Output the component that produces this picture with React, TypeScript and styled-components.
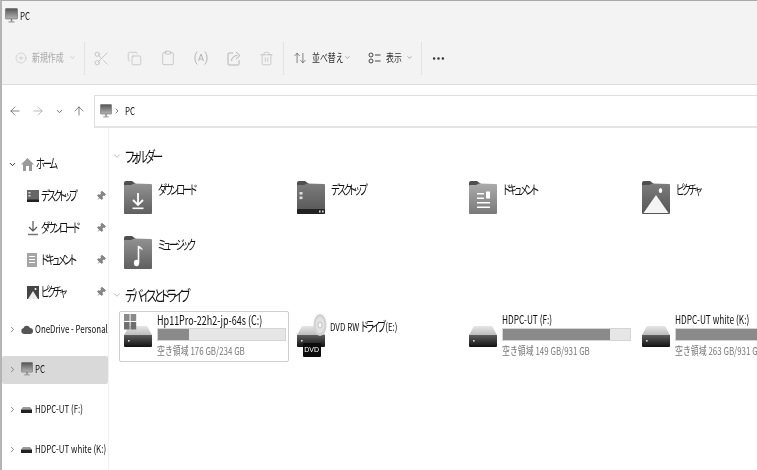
import type { ReactNode } from "react";
import styled, { createGlobalStyle } from "styled-components";
import {
  ArrowLeft,
  ArrowRight,
  ArrowUp,
  ArrowUpDown,
  ChevronDown,
  ChevronRight,
  CirclePlus,
  Clipboard,
  Copy,
  MoreHorizontal,
  Pin,
  Scissors,
  Trash2,
} from "lucide-react";

const GlobalStyle = createGlobalStyle`
  html, body {
    margin: 0;
    background: #fff;
  }
  body {
    font-family: "Noto Sans CJK JP", "Liberation Sans", sans-serif;
    color: #111;
    line-height: 1.2;
  }
`;

const Gradients = () => (
  <svg width="0" height="0" style={{ position: "absolute" }}>
    <defs>
      <linearGradient id="fGray" x1="0" y1="0" x2="0" y2="1">
        <stop offset="0" stopColor="#929292" />
        <stop offset="1" stopColor="#5f5f5f" />
      </linearGradient>
      <linearGradient id="fLight" x1="0" y1="0" x2="0" y2="1">
        <stop offset="0" stopColor="#ababab" />
        <stop offset="1" stopColor="#797979" />
      </linearGradient>
      <linearGradient id="fDark" x1="0" y1="0" x2="0" y2="1">
        <stop offset="0" stopColor="#7c7c7c" />
        <stop offset="1" stopColor="#555" />
      </linearGradient>
      <linearGradient id="dTop" x1="0" y1="0" x2="0" y2="1">
        <stop offset="0" stopColor="#e6e6e6" />
        <stop offset="1" stopColor="#bdbdbd" />
      </linearGradient>
      <linearGradient id="dBody" x1="0" y1="0" x2="0" y2="1">
        <stop offset="0" stopColor="#5e5e5e" />
        <stop offset="1" stopColor="#111" />
      </linearGradient>
      <linearGradient id="screen" x1="0" y1="0" x2="0" y2="1">
        <stop offset="0" stopColor="#555" />
        <stop offset="1" stopColor="#b5b5b5" />
      </linearGradient>
    </defs>
  </svg>
);

const PcIcon = ({ size = 13 }: { size?: number }) => (
  <svg width={size} height={size * 1.15} viewBox="0 0 13 15">
    <rect x="0.5" y="0.5" width="12" height="10.500" rx="0.6" fill="url(#screen)" stroke="#666" strokeWidth="0.6" />
    <rect x="5.8" y="11" width="1.4" height="2.500" fill="#777" />
    <rect x="3.5" y="13.500" width="6" height="1" fill="#888" />
  </svg>
);

const Folder = ({ fill, children }: { fill: string; children: ReactNode }) => (
  <svg width="28" height="33" viewBox="0 0 28 33">
    <path d="M0 2a2 2 0 0 1 2-2h6l4 3v3H0z" fill="#4f4f4f" />
    <path d="M0 5a1 1 0 0 1 1-1h6l3-1.5 17 .5a1 1 0 0 1 1 1v28a1 1 0 0 1-1 1H1a1 1 0 0 1-1-1z" fill={`url(#${fill})`} />
    {children}
  </svg>
);

const DownloadFolder = () => (
  <Folder fill="fGray">
    <path d="M14 12v12M9 19l5 5 5-5" fill="none" stroke="#fff" strokeWidth="1.8" />
    <rect x="8.5" y="26.5" width="11" height="1.6" fill="#fff" />
  </Folder>
);

const DesktopFolder = () => (
  <Folder fill="fDark">
    <rect x="0" y="28" width="28" height="5" rx="1" fill="#222" />
    <rect x="2.5" y="11" width="3" height="2.6" fill="#ddd" />
    <rect x="2.5" y="15.5" width="3" height="2.6" fill="#ddd" />
    <rect x="22" y="29.5" width="1.6" height="2" fill="#ddd" />
    <rect x="25" y="29.5" width="1.6" height="2" fill="#ddd" />
  </Folder>
);

const DocumentsFolder = () => (
  <Folder fill="fLight">
    <rect x="8" y="12" width="7" height="1.5" fill="#fff" />
    <rect x="8" y="16.5" width="7" height="1.5" fill="#fff" />
    <rect x="17" y="10.5" width="4" height="7" fill="#fff" />
    <rect x="8" y="21" width="13" height="1.5" fill="#fff" />
    <rect x="8" y="25.5" width="13" height="1.5" fill="#fff" />
  </Folder>
);

const PicturesFolder = () => (
  <Folder fill="fDark">
    <path d="M1.5 32 14 14l12.5 18z" fill="#f4f4f4" />
    <ellipse cx="18.5" cy="9.5" rx="1.7" ry="2.6" fill="#fff" />
  </Folder>
);

const MusicFolder = () => (
  <Folder fill="fGray">
    <path d="M14.5 10v17" stroke="#fff" strokeWidth="1.6" />
    <path d="M14.5 9.5c2 1.5 4 2 4.5 5-1.5-1.5-3-2-4.5-2z" fill="#fff" />
    <ellipse cx="12.5" cy="27" rx="2.6" ry="3.2" fill="#fff" />
  </Folder>
);

const DriveShape = () => (
  <>
    <path d="M5 12h18l5 9H0z" fill="url(#dTop)" />
    <path d="M0 21h28v11a1 1 0 0 1-1 1H1a1 1 0 0 1-1-1z" fill="url(#dBody)" />
    <rect x="4" y="26" width="1.6" height="1.6" fill="#ddd" />
  </>
);

const HardDrive = () => (
  <svg width="28" height="34" viewBox="0 0 28 34">
    <DriveShape />
  </svg>
);

const WindowsDrive = () => (
  <svg width="28" height="34" viewBox="0 0 28 34">
    <DriveShape />
    <rect x="0" y="0" width="5.6" height="7" fill="#8a8a8a" />
    <rect x="6.6" y="0" width="5.6" height="7" fill="#8a8a8a" />
    <rect x="0" y="8" width="5.6" height="7.5" fill="#6f6f6f" />
    <rect x="6.6" y="8" width="5.6" height="7.5" fill="#6f6f6f" />
  </svg>
);

const DvdDrive = () => (
  <svg width="30" height="34" viewBox="0 0 30 34">
    <DriveShape />
    <ellipse cx="23" cy="11" rx="6.500" ry="11" fill="#d2d2d2" />
    <ellipse cx="23" cy="11" rx="4.500" ry="8" fill="#e2e2e2" />
    <ellipse cx="23" cy="11" rx="2" ry="3" fill="#f7f7f7" stroke="#aaa" strokeWidth="0.6" />
  </svg>
);

const RenameIcon = () => (
  <svg width="14" height="18" viewBox="0 0 14 18" fill="none" stroke="#b4b4b4" strokeWidth="1">
    <path d="M3.500 2.500C1.500 4 1 6.500 1 9s.5 5 2.500 6.500M10.500 2.500C12.500 4 13 6.500 13 9s-.5 5-2.500 6.500" />
    <path d="M4.500 12 7 5l2.500 7M5.400 10h3.200" />
  </svg>
);

const ShareIcon = () => (
  <svg width="14" height="16" viewBox="0 0 14 16" fill="none" stroke="#b4b4b4" strokeWidth="1">
    <path d="M6 3H2a1 1 0 0 0-1 1v10a1 1 0 0 0 1 1h9a1 1 0 0 0 1-1v-4" />
    <path d="M4.500 11c.3-3.500 2.500-5.500 6-5.500M9 2l4 3.500L9 9" />
  </svg>
);

const Windows = styled.div`
  box-sizing: border-box;
  width: 757px;
  height: 470px;
  border-top: 1px solid #a9a9a9;
  border-left: 2px solid #b4b4b4;
  overflow: hidden;
  background: #fff;
  display: flex;
  flex-direction: column;
  filter: blur(0.35px);
`;

const Ribbon = styled.header`
  background: #f3f3f3;
  border-bottom: 1px solid #dcdcdc;
  height: 83px;
  flex: none;
`;

const TitleBar = styled.div`
  height: 29px;
  padding-left: 3px;
  display: flex;
  align-items: center;
  gap: 2px;
`;

const Toolbar = styled.div`
  height: 56px;
  display: flex;
  align-items: center;
  color: #333;
`;

const Label = styled.span<{ $size?: number; $color?: string }>`
  display: block;
  font-size: ${(p) => p.$size ?? 12}px;
  line-height: 1.2;
  color: ${(p) => p.$color ?? "#111"};
  white-space: nowrap;
  transform: scaleX(0.72);
  transform-origin: left center;
`;

const Kana = styled.span`
  font-size: 1.18em;
  line-height: 1;
  font-feature-settings: "palt";
  letter-spacing: -0.25em;
`;

const Tool = styled.div<{ $width: number; $pad: number }>`
  box-sizing: border-box;
  width: ${(p) => p.$width}px;
  padding-left: ${(p) => p.$pad}px;
  display: flex;
  align-items: center;
  gap: 5px;
  position: relative;
  flex: none;
`;

const ToolChevron = styled.span<{ $left: number }>`
  position: absolute;
  left: ${(p) => p.$left}px;
  top: 50%;
  margin-top: -4px;
  line-height: 0;
`;

const IconTool = styled.div`
  width: 33px;
  flex: none;
  display: flex;
  justify-content: center;
  align-items: center;
`;

const Sep = styled.div`
  width: 1px;
  height: 33px;
  background: #e2e2e2;
  flex: none;
`;

const Nav = styled.div`
  height: 43px;
  flex: none;
  display: flex;
  align-items: flex-end;
`;

const NavButtons = styled.div`
  width: 92px;
  height: 33px;
  flex: none;
  display: grid;
  grid-template-columns: 25px 22px 20px 20px;
  box-sizing: border-box;
  padding-bottom: 1px;
  align-items: center;
  justify-items: center;
`;

const AddressBar = styled.div`
  flex: 1;
  height: 33px;
  box-sizing: border-box;
  border: 1px solid #dedede;
  border-bottom: 2px solid #e4e4e4;
  border-right: none;
  display: flex;
  align-items: center;
  padding-left: 5px;
  gap: 1px;
`;

const AddressText = styled.div`
  margin-left: 3px;
`;

const Body = styled.div`
  flex: 1;
  display: flex;
  min-height: 0;
`;

const Sidebar = styled.nav`
  width: 106px;
  flex: none;
  border-right: 1px solid #f0f0f0;
  padding-top: 20px;
  overflow: hidden;
`;

const SideRow = styled.div<{ $height: number; $indent: number; $active?: boolean }>`
  height: ${(p) => p.$height}px;
  display: flex;
  align-items: center;
  padding-left: ${(p) => p.$indent}px;
  position: relative;
  &::before {
    content: "";
    display: ${(p) => (p.$active ? "block" : "none")};
    position: absolute;
    inset: 7px 0 5px 0;
    background: #d9d9d9;
    border-radius: 2px;
  }
  & > * {
    position: relative;
  }
`;

const SideChevron = styled.span`
  width: 13px;
  flex: none;
  line-height: 0;
`;

const SideIcon = styled.span<{ $width: number }>`
  width: ${(p) => p.$width}px;
  flex: none;
  line-height: 0;
`;

const SideText = styled.span`
  flex: 1;
  min-width: 0;
  display: block;
  margin-top: -1px;
`;

const PinBox = styled.span`
  position: absolute;
  left: 94px;
  line-height: 0;
  transform: rotate(40deg);
`;

const Group = styled.div`
  margin-bottom: 1px;
`;

const Main = styled.main`
  flex: 1;
  min-width: 0;
  padding-top: 18px;
  overflow: hidden;
`;

const SectionHead = styled.div`
  height: 20px;
  display: flex;
  align-items: center;
  padding-left: 3px;
  gap: 3px;
`;

const Grid = styled.div<{ $top: number; $bottom: number; $gap: number }>`
  display: grid;
  grid-template-columns: repeat(4, 172.7px);
  row-gap: ${(p) => p.$gap}px;
  margin: ${(p) => p.$top}px 0 ${(p) => p.$bottom}px 10px;
  width: 700px;
`;

const FolderItem = styled.div`
  height: 33px;
  display: flex;
  padding-left: 5px;
  gap: 6px;
`;

const FolderName = styled.div`
  padding-top: 1px;
`;

const Tile = styled.div<{ $selected?: boolean }>`
  box-sizing: border-box;
  width: 170px;
  height: 51px;
  border: 1px solid ${(p) => (p.$selected ? "#cfcfcf" : "transparent")};
  border-radius: 2px;
  display: flex;
  padding-left: 4px;
  gap: 5px;
`;

const TileIcon = styled.div`
  width: 28px;
  height: 34px;
  margin-top: 2px;
  position: relative;
  line-height: 0;
  flex: none;
`;

const Badge = styled.span`
  position: absolute;
  left: 6px;
  top: 29px;
  width: 18px;
  height: 14px;
  background: #0c0c0c;
  border-radius: 1px;
  color: #fff;
  font-size: 7px;
  line-height: 14px;
  text-align: center;
  font-family: "Liberation Sans", sans-serif;
`;

const TileText = styled.div<{ $center?: boolean }>`
  flex: 1;
  min-width: 0;
  display: flex;
  flex-direction: column;
  padding-top: ${(p) => (p.$center ? "7px" : "0")};
  justify-content: flex-start;
`;

const TileLine = styled.div`
  height: 15px;
  display: flex;
  align-items: center;
`;

const Meter = styled.div`
  box-sizing: border-box;
  width: 129px;
  height: 13px;
  margin-top: 1px;
  margin-bottom: 2px;
  background: #e6e6e6;
  border: 1px solid #d4d4d4;
`;

const MeterFill = styled.div`
  height: 100%;
  background: #8a8a8a;
`;

const gray = "#b4b4b4";

const folders: { name: string; icon: ReactNode }[] = [
  { name: "ダウンロード", icon: <DownloadFolder /> },
  { name: "デスクトップ", icon: <DesktopFolder /> },
  { name: "ドキュメント", icon: <DocumentsFolder /> },
  { name: "ピクチャ", icon: <PicturesFolder /> },
  { name: "ミュージック", icon: <MusicFolder /> },
];

const SmallDrive = () => (
  <svg width="11" height="6" viewBox="0 0 11 6">
    <path d="M2 0h7l2 2.500H0z" fill="#999" />
    <rect y="2.500" width="11" height="3.500" fill="#222" />
  </svg>
);

const quick: { name: string; icon: ReactNode }[] = [
  {
    name: "デスクトップ",
    icon: (
      <svg width="12" height="12" viewBox="0 0 12 12">
        <rect width="12" height="12" fill="#666" />
        <rect y="9.500" width="12" height="2.500" fill="#222" />
        <rect x="1.500" y="2" width="2" height="1.500" fill="#ddd" />
        <rect x="1.500" y="5" width="2" height="1.500" fill="#ddd" />
      </svg>
    ),
  },
  {
    name: "ダウンロード",
    icon: (
      <svg width="12" height="16" viewBox="0 0 12 16" fill="none" stroke="#555" strokeWidth="1.200">
        <path d="M6 1v10M2 7l4 4 4-4" />
        <path d="M1 14.500h10" stroke="#777" strokeWidth="1.500" />
      </svg>
    ),
  },
  {
    name: "ドキュメント",
    icon: (
      <svg width="11" height="14" viewBox="0 0 11 14">
        <rect width="10" height="14" fill="#a5a5a5" />
        <path d="M2 3.500h6M2 6.500h6M2 9.500h6" stroke="#fff" />
      </svg>
    ),
  },
  {
    name: "ピクチャ",
    icon: (
      <svg width="12" height="13" viewBox="0 0 12 13">
        <rect width="12" height="13" fill="#444" />
        <path d="M1 13 6 5l5 8z" fill="#eee" />
        <circle cx="8.500" cy="3" r="1" fill="#fff" />
      </svg>
    ),
  },
];

const drives = [
  { name: "HDPC-UT (F:)", free: 149 },
  { name: "HDPC-UT white (K:)", free: 263 },
];

const App = () => (
  <>
    <GlobalStyle />
    <Gradients />
    <Windows>
      <Ribbon>
        <TitleBar>
          <PcIcon size={13} />
          <Label $size={11}>PC</Label>
        </TitleBar>
        <Toolbar>
          <Tool $width={82} $pad={13}>
            <CirclePlus size={12} color={gray} strokeWidth={1} />
            <Label $size={11} $color="#a8a8a8">新規作成</Label>
            <ToolChevron $left={67}>
              <ChevronDown size={7} color={gray} />
            </ToolChevron>
          </Tool>
          <Sep />
          <IconTool><Scissors size={17} color={gray} strokeWidth={1} /></IconTool>
          <IconTool><Copy size={15} color={gray} strokeWidth={1} /></IconTool>
          <IconTool><Clipboard size={16} color={gray} strokeWidth={1} /></IconTool>
          <IconTool><RenameIcon /></IconTool>
          <IconTool><ShareIcon /></IconTool>
          <IconTool><Trash2 size={15} color={gray} strokeWidth={1} /></IconTool>
          <Sep />
          <Tool $width={76} $pad={9}>
            <ArrowUpDown size={14} color="#333" strokeWidth={1} />
            <Label $size={11} $color="#333">並べ替え</Label>
            <ToolChevron $left={60}>
              <ChevronDown size={7} color="#777" />
            </ToolChevron>
          </Tool>
          <Tool $width={61} $pad={8}>
            <svg width="13" height="12" viewBox="0 0 13 12" fill="none" stroke="#333" strokeWidth="0.900">
              <circle cx="3" cy="3" r="2" />
              <circle cx="3" cy="9" r="2" />
              <path d="M7 3h5.500M7 9h5.500" />
            </svg>
            <Label $size={11} $color="#333">表示</Label>
            <ToolChevron $left={46}>
              <ChevronDown size={7} color="#777" />
            </ToolChevron>
          </Tool>
          <Sep />
          <IconTool><MoreHorizontal size={15} color="#333" strokeWidth={2} /></IconTool>
        </Toolbar>
      </Ribbon>
      <Nav>
        <NavButtons>
          <ArrowLeft size={14} color="#444" strokeWidth={1.1} />
          <ArrowRight size={14} color="#999" strokeWidth={1.1} />
          <ChevronDown size={9} color="#444" />
          <ArrowUp size={14} color="#444" strokeWidth={1.1} />
        </NavButtons>
        <AddressBar>
          <PcIcon size={12} />
          <ChevronRight size={8} color="#444" />
          <AddressText><Label $size={11}>PC</Label></AddressText>
        </AddressBar>
      </Nav>
      <Body>
        <Sidebar>
          <Group>
            <SideRow $height={32} $indent={6}>
              <SideChevron><ChevronDown size={9} color="#222" strokeWidth={2.500} /></SideChevron>
              <SideIcon $width={15}>
                <svg width="13" height="13" viewBox="0 0 13 13">
                  <path d="M6.500 0 13 6.500h-2V13H8V8H5v5H2V6.500H0z" fill="#9a9a9a" />
                </svg>
              </SideIcon>
              <SideText><Label $size={11}><Kana>ホーム</Kana></Label></SideText>
            </SideRow>
            {quick.map((q) => (
              <SideRow key={q.name} $height={32} $indent={25}>
                <SideIcon $width={14}>{q.icon}</SideIcon>
                <SideText><Label $size={11}><Kana>{q.name}</Kana></Label></SideText>
                <PinBox><Pin size={10} color="#777" fill="#888" /></PinBox>
              </SideRow>
            ))}
          </Group>
          <SideRow $height={40} $indent={6}>
            <SideChevron><ChevronRight size={9} color="#666" /></SideChevron>
            <SideIcon $width={14}>
              <svg width="12" height="9" viewBox="0 0 12 9">
                <path d="M3 9a3 3 0 0 1-.5-5.900A3.500 3.500 0 0 1 9 3a3 3 0 0 1 0 6z" fill="#555" />
              </svg>
            </SideIcon>
            <SideText><Label $size={11}>OneDrive - Personal</Label></SideText>
          </SideRow>
          <SideRow $height={40} $indent={6} $active>
            <SideChevron><ChevronRight size={9} color="#666" /></SideChevron>
            <SideIcon $width={14}><PcIcon size={12} /></SideIcon>
            <SideText><Label $size={11}>PC</Label></SideText>
          </SideRow>
          <SideRow $height={40} $indent={6}>
            <SideChevron><ChevronRight size={9} color="#666" /></SideChevron>
            <SideIcon $width={14}><SmallDrive /></SideIcon>
            <SideText><Label $size={11}>HDPC-UT (F:)</Label></SideText>
          </SideRow>
          <SideRow $height={40} $indent={6}>
            <SideChevron><ChevronRight size={9} color="#666" /></SideChevron>
            <SideIcon $width={14}><SmallDrive /></SideIcon>
            <SideText><Label $size={11}>HDPC-UT white (K:)</Label></SideText>
          </SideRow>
        </Sidebar>
        <Main>
          <SectionHead>
            <ChevronDown size={10} color="#777" strokeWidth={1.200} />
            <Label $size={13}><Kana>フォルダー</Kana></Label>
          </SectionHead>
          <Grid $top={15} $bottom={16} $gap={22}>
            {folders.map((f) => (
              <FolderItem key={f.name}>
                {f.icon}
                <FolderName><Label $size={11}><Kana>{f.name}</Kana></Label></FolderName>
              </FolderItem>
            ))}
          </Grid>
          <SectionHead>
            <ChevronDown size={10} color="#777" strokeWidth={1.200} />
            <Label $size={13}><Kana>デバイスとドライブ</Kana></Label>
          </SectionHead>
          <Grid $top={6} $bottom={0} $gap={0}>
            <Tile $selected>
              <TileIcon><WindowsDrive /></TileIcon>
              <TileText>
                <TileLine><Label $size={12.500}>Hp11Pro-22h2-jp-64s (C:)</Label></TileLine>
                <Meter><MeterFill style={{ width: `${((234 - 176) / 234) * 100}%` }} /></Meter>
                <TileLine><Label $size={11} $color="#777">空き領域 176 GB/234 GB</Label></TileLine>
              </TileText>
            </Tile>
            <Tile>
              <TileIcon><DvdDrive /><Badge>DVD</Badge></TileIcon>
              <TileText $center>
                <TileLine><Label $size={11}>DVD RW <Kana>ドライブ</Kana> (E:)</Label></TileLine>
              </TileText>
            </Tile>
            {drives.map((d) => (
              <Tile key={d.name}>
                <TileIcon><HardDrive /></TileIcon>
                <TileText>
                  <TileLine><Label $size={11.500}>{d.name}</Label></TileLine>
                  <Meter><MeterFill style={{ width: `${((931 - d.free) / 931) * 100}%` }} /></Meter>
                  <TileLine><Label $size={11} $color="#777">空き領域 {d.free} GB/931 GB</Label></TileLine>
                </TileText>
              </Tile>
            ))}
          </Grid>
        </Main>
      </Body>
    </Windows>
  </>
);

export default App;
